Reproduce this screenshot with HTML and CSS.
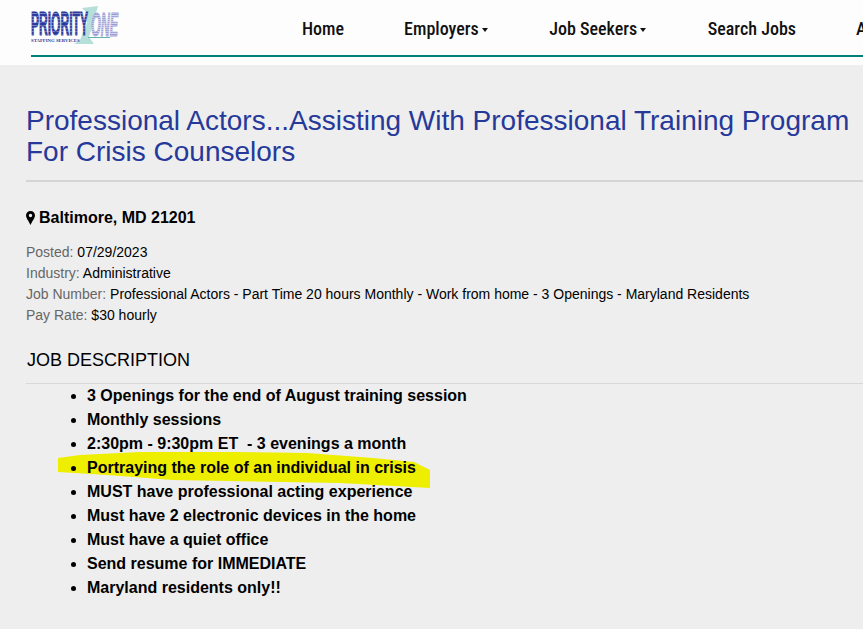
FILE: index.html
```html
<!DOCTYPE html>
<html lang="en">
<head>
  <meta charset="UTF-8" />
  <title>Professional Actors - Priority One Staffing Services</title>
  <link rel="stylesheet" href="styles.css">
</head>
<body>
  <header class="site-header">
    <div class="header-inner">
      <a class="logo" href="#">
        <svg width="90" height="46" viewBox="0 0 90 46">
          <defs>
            <pattern id="hatch-blue" width="3" height="3" patternUnits="userSpaceOnUse">
              <rect width="3" height="2.5" fill="#2b3a9c"/>
              <rect y="2.5" width="3" height="0.5" fill="#6a75bd"/>
            </pattern>
            <pattern id="hatch-pale" width="3" height="2" patternUnits="userSpaceOnUse">
              <rect width="3" height="1.3" fill="#9a9dd4"/>
              <rect y="1.3" width="3" height="0.7" fill="#d2d3ec"/>
            </pattern>
          </defs>
          <path d="M51 8 L67 6 L58 37 L63 44 L43 44 L49 40 L56 23 L56 13 Z" fill="#b5dfd8"/>
          <rect x="57" y="37" width="22" height="1" fill="#5fb5aa"/>
          <text class="logo-one" transform="translate(60 36) scale(.378 1)" fill="url(#hatch-pale)">ONE</text>
          <text class="logo-priority" transform="translate(0 35) scale(.366 1)" fill="url(#hatch-blue)">PRIORITY</text>
          <text class="logo-sub" transform="translate(0 41.5) scale(1.195 1)">STAFFING SERVICES</text>
        </svg>
      </a>
      <nav class="main-nav">
        <a href="#">Home</a>
        <a href="#">Employers<span class="caret"></span></a>
        <a href="#">Job Seekers<span class="caret"></span></a>
        <a href="#">Search Jobs</a>
        <a href="#">About</a>
      </nav>
    </div>
  </header>

  <main class="job">
    <h1>Professional Actors...Assisting With Professional Training Program For Crisis Counselors</h1>

    <h3 class="location">
      <svg class="pin" width="9" height="14" viewBox="0 0 9 14"><path fill-rule="evenodd" d="M4.5 0C2 0 0 2 0 4.5 0 7 3 10.5 4.5 14 6 10.5 9 7 9 4.5 9 2 7 0 4.5 0ZM4.5 2.8a1.7 1.7 0 1 1 0 3.4 1.7 1.7 0 0 1 0-3.4Z"/></svg>
      <span>Baltimore, MD 21201</span>
    </h3>

    <ul class="meta">
      <li><span>Posted:</span> 07/29/2023</li>
      <li><span>Industry:</span> Administrative</li>
      <li><span>Job Number:</span> Professional Actors - Part Time 20 hours Monthly - Work from home - 3 Openings - Maryland Residents</li>
      <li><span>Pay Rate:</span> $30 hourly</li>
    </ul>

    <h4 class="section-title">JOB DESCRIPTION</h4>

    <div class="description">
      <svg class="highlight" width="380" height="44" viewBox="0 0 380 44">
        <path d="M4 6 L26 3 L86 0 L180 0 L253 1 L319 6 L360 10 L376 18 L376 36 L286 31 L119 28 L53 23 L4 20 Z" fill="#eeee00"/>
      </svg>
      <ul>
        <li>3 Openings for the end of August training session</li>
        <li>Monthly sessions</li>
        <li>2:30pm - 9:30pm ET&nbsp; - 3 evenings a month</li>
        <li>Portraying the role of an individual in crisis</li>
        <li>MUST have professional acting experience</li>
        <li>Must have 2 electronic devices in the home</li>
        <li>Must have a quiet office</li>
        <li>Send resume for IMMEDIATE</li>
        <li>Maryland residents only!!</li>
      </ul>
    </div>
  </main>
</body>
</html>
```

FILE: styles.css
```css
html, body { margin: 0; padding: 0; overflow: hidden; }
body { height: 629px; background: #eeeeee; color: #000; font-family: "Liberation Sans", Arial, sans-serif; }

.site-header { height: 65px; background: #fdfdfd; overflow: hidden; }
.header-inner { display: flex; height: 55px; margin-left: 31px; border-bottom: 2px solid #00807a; }
.logo { display: block; width: 90px; }
.logo svg { display: block; overflow: visible; }
.logo-priority { font: bold 33px "Liberation Sans", sans-serif; stroke: #2b3a9c; stroke-width: 1px; }
.logo-one { font: italic bold 33px "Liberation Sans", sans-serif; stroke: #a3a6d8; stroke-width: 1px; }
.logo-sub { font: bold 4px "Liberation Serif", serif; fill: #2b3a9c; }

.main-nav { display: flex; margin-left: 181px; gap: 60px; white-space: nowrap; }
.main-nav a { font: 500 18px/58px Roboto, sans-serif; font-stretch: condensed; color: #111; text-decoration: none; }
.caret { display: inline-block; margin: 0 1.5px 0 3px; vertical-align: middle; border-top: 4px solid #111; border-left: 3px solid transparent; border-right: 3px solid transparent; }

.job { padding: 0 0 0 26px; }
h1 { margin: 40px 0 0; padding-bottom: 13px; border-bottom: 2px solid #d5d5d5; font-size: 28px; font-weight: 400; line-height: 31px; color: #26399a; }
.location { display: flex; align-items: center; gap: 4px; margin: 26px 0 0; font-size: 16px; font-weight: 700; line-height: 20px; }

.meta { list-style: none; margin: 14px 0 0; padding: 0; font-size: 14px; line-height: 21px; }
.meta span { color: #666; }

.section-title { margin: 24px 0 0; padding: 0 0 12px 1px; border-bottom: 1px solid #d8d8d8; font-size: 18px; font-weight: 400; line-height: 21px; }

.description { position: relative; font-size: 16px; font-weight: 700; line-height: 24px; }
.description ul { position: relative; margin: 0; padding: 0 0 0 61px; }
.highlight { position: absolute; left: 28px; top: 68px; }
```
